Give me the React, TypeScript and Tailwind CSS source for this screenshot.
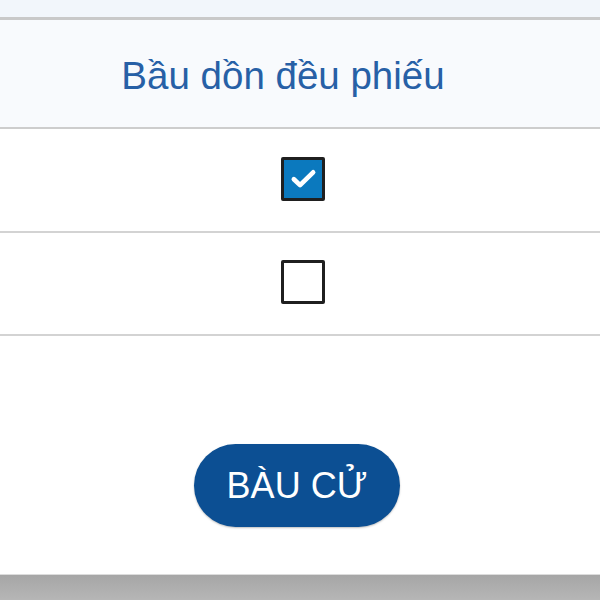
const rows = [{ id: 1, checked: true }, { id: 2, checked: false }];

function Box({ checked }: { checked: boolean }) {
  return (
    <div
      className={`w-[44px] h-[44px] rounded-[2px] border-[3px] border-[#1f1f1f] flex items-center justify-center ${
        checked ? 'bg-[#0b79be]' : 'bg-white'
      }`}
    >
      {checked && (
        <svg width="33" height="33" viewBox="0 0 24 24" fill="none">
          <path d="M5 12.5l4.5 4.3L19 7.5" stroke="#fff" strokeWidth="3.4" strokeLinecap="round" strokeLinejoin="round" />
        </svg>
      )}
    </div>
  );
}

export default function App() {
  return (
    <div className="w-[600px] h-[600px] flex flex-col bg-white overflow-hidden font-['Liberation_Sans',Arial,sans-serif]">
      <div className="h-[20px] shrink-0 bg-[#f2f6fb] border-b-[3px] border-[#c9c9c9]" />
      <div className="h-[109px] shrink-0 bg-[#f8fafd] border-b-2 border-[#cdcdcd] flex items-center justify-center pr-[34px] pt-[4px]">
        <span className="text-[38.5px] text-[#2760a6]">Bầu dồn đều phiếu</span>
      </div>
      {rows.map(row => (
        <div
          key={row.id}
          className={`${row.id === 1 ? 'h-[104px]' : 'h-[103px]'} shrink-0 border-b-2 border-[#d3d3d3] flex items-center justify-center pl-[6px] pb-[3px]`}
        >
          <Box checked={row.checked} />
        </div>
      ))}
      <div className="flex-1 flex justify-center pt-[108px] pr-[6px]">
        <button className="w-[206px] h-[83px] rounded-full bg-[#0c4f93] text-white text-[36px] leading-none shadow-[0_1px_2px_rgba(0,0,0,0.25)]">
          BÀU CỬ
        </button>
      </div>
      <div className="h-[26px] shrink-0 border-t border-[#dcdcdc] bg-gradient-to-b from-[#a6a6a6] to-[#b6b6b6]" />
    </div>
  );
}
